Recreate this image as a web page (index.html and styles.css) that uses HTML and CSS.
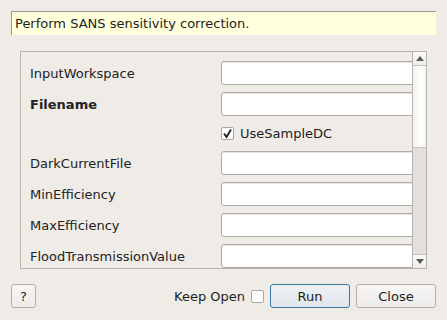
FILE: index.html
```html
<!DOCTYPE html>
<html>
<head>
<meta charset="utf-8">
<link rel="stylesheet" href="styles.css">
</head>
<body>
<div class="dialog">
  <div class="desc">Perform SANS sensitivity correction.</div>
  <div class="params">
    <div class="viewport">
      <div class="grid">
        <div class="label">InputWorkspace</div>
        <div class="field"></div>
        <div class="label bold">Filename</div>
        <div class="field"></div>
        <div class="label"></div>
        <div class="check-row">
          <span class="checkbox checked">
            <svg width="11" height="11" viewBox="0 0 11 11"><path d="M2 5.5 L4.5 9 L9 1.5" fill="none" stroke="#1e1e1e" stroke-width="1.8"/></svg>
          </span>
          <span>UseSampleDC</span>
        </div>
        <div class="label">DarkCurrentFile</div>
        <div class="field"></div>
        <div class="label">MinEfficiency</div>
        <div class="field"></div>
        <div class="label">MaxEfficiency</div>
        <div class="field"></div>
        <div class="label">FloodTransmissionValue</div>
        <div class="field"></div>
      </div>
    </div>
    <div class="scrollbar">
      <div class="sb-btn sb-up"><svg width="8" height="5" viewBox="0 0 8 5"><path d="M0 5 L4 0 L8 5 Z" fill="#5a5a5a"/></svg></div>
      <div class="sb-handle"></div>
      <div class="sb-track"></div>
      <div class="sb-btn sb-down"><svg width="8" height="5" viewBox="0 0 8 5"><path d="M0 0 L4 5 L8 0 Z" fill="#5a5a5a"/></svg></div>
    </div>
  </div>
  <div class="footer">
    <button class="btn help">?</button>
    <div class="spacer"></div>
    <span class="keep">Keep Open</span>
    <span class="checkbox"></span>
    <button class="btn run">Run</button>
    <button class="btn close">Close</button>
  </div>
</div>
</body>
</html>
```

FILE: styles.css
```css
html, body {
  margin: 0;
  padding: 0;
}
body {
  width: 447px;
  height: 320px;
  overflow: hidden;
  background: #efece8;
  font-family: "DejaVu Sans", sans-serif;
  font-size: 13px;
  color: #1e1e1e;
}
.dialog {
  display: flex;
  flex-direction: column;
  padding: 11px 11px 12px 11px;
  box-sizing: border-box;
  height: 320px;
}
.desc {
  height: 24px;
  box-sizing: border-box;
  background: #ffffdc;
  border-top: 1px solid #9d9a96;
  border-left: 1px solid #9d9a96;
  padding-left: 3px;
  line-height: 23px;
  white-space: nowrap;
}
.params {
  margin: 16px 9px 0 9px;
  height: 218px;
  box-sizing: border-box;
  border: 1px solid #b6b2ae;
  display: flex;
}
.viewport {
  flex: 1;
  overflow: hidden;
}
.grid {
  display: grid;
  grid-template-columns: 191px 210px;
  grid-auto-rows: 24px;
  row-gap: 7px;
  padding: 9px 0 0 9px;
}
.grid > .check-row {
  height: 21px;
}
.label {
  display: flex;
  align-items: center;
  white-space: nowrap;
  color: #222;
}
.bold {
  font-weight: bold;
}
.field {
  background: #fff;
  border: 1px solid #aeaaa6;
  border-radius: 3px;
  box-sizing: border-box;
  box-shadow: inset 0 1px 0 #e6e4e1;
}
.check-row {
  display: flex;
  align-items: center;
  gap: 6px;
}
.grid {
  grid-template-rows: 24px 24px 21px 24px 24px 24px 24px;
}
.checkbox {
  display: inline-flex;
  align-items: center;
  justify-content: center;
  width: 13px;
  height: 13px;
  box-sizing: border-box;
  background: #fff;
  border: 1px solid #a9a6a2;
  border-radius: 2px;
}
.scrollbar {
  width: 14px;
  box-sizing: border-box;
  border-left: 1px solid #b6b2ae;
  display: flex;
  flex-direction: column;
}
.sb-btn {
  height: 13px;
  display: flex;
  align-items: center;
  justify-content: center;
  background: linear-gradient(#fafaf9, #eeedeb);
}
.sb-up {
  border-bottom: 1px solid #c4c1bd;
}
.sb-down {
  border-top: 1px solid #c4c1bd;
}
.sb-handle {
  height: 82px;
  background: linear-gradient(to right, #f2f1f0, #ffffff 60%, #f4f3f2);
  border-bottom: 1px solid #c9c6c2;
  box-sizing: border-box;
}
.sb-track {
  flex: 1;
  background: #e1e0dd;
}
.footer {
  margin-top: 15px;
  height: 24px;
  display: flex;
  align-items: center;
}
.spacer {
  flex: 1;
}
.btn {
  height: 24px;
  box-sizing: border-box;
  font-family: "DejaVu Sans", sans-serif;
  font-size: 13px;
  color: #1e1e1e;
  border: 1px solid #b2afab;
  border-radius: 3px;
  background: linear-gradient(#f7f6f5, #ecebe9);
  padding: 0;
}
.help {
  width: 25px;
}
.keep {
  margin-right: 6px;
}
.footer .checkbox {
  margin-right: 6px;
}
.run {
  width: 80px;
  border-color: #3a78a8;
  background: linear-gradient(#eef1f4, #dfe5ea);
}
.close {
  width: 80px;
  margin-left: 6px;
}
```
